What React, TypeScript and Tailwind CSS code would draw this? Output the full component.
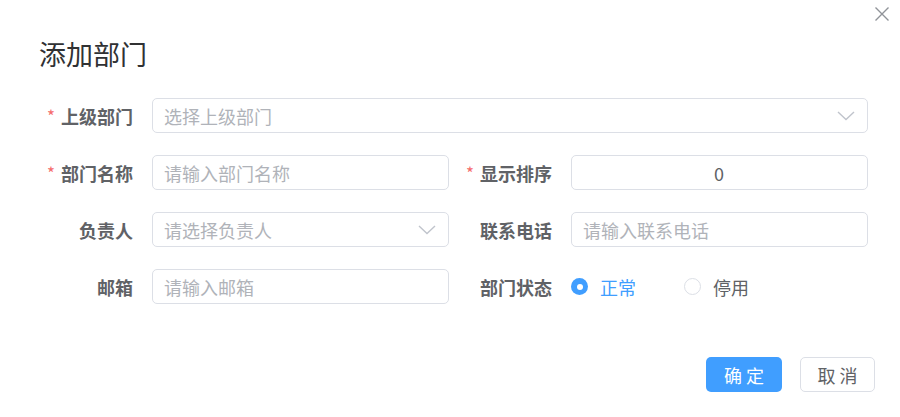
import React from "react";

const font = { fontFamily: '"Noto Sans CJK SC", "Noto Sans", sans-serif' };

function Label({ text, required }: { text: string; required?: boolean }) {
  return (
    <div className="w-[122px] shrink-0 pr-[19px] flex items-center justify-end text-[18px] font-bold text-[#606266] leading-none">
      {required && <span className="text-[#f56c6c] font-normal mr-[6px] text-[17px]">*</span>}
      {text}
    </div>
  );
}

function Chevron() {
  return (
    <svg width="18" height="10" viewBox="0 0 18 10" className="shrink-0">
      <path d="M1 1 L9 8.5 L17 1" fill="none" stroke="#c0c4cc" strokeWidth="1.4" />
    </svg>
  );
}

function Input({ placeholder, value, select, center }: { placeholder?: string; value?: string; select?: boolean; center?: boolean }) {
  return (
    <div className="flex-1 h-[35px] border border-[#dcdfe6] rounded-[5px] flex items-center pl-[11px] pr-[12px] text-[18px] leading-none">
      <span className={`flex-1 ${value ? "text-[#606266]" : "text-[#b0b3b9]"} ${center ? "text-center" : ""}`}>
        {value ?? placeholder}
      </span>
      {select && <Chevron />}
    </div>
  );
}

export default function App() {
  return (
    <div className="relative w-[900px] h-[417px] bg-white overflow-hidden" style={font}>
      <svg className="absolute top-[7px] right-[11px]" width="14" height="14" viewBox="0 0 14 14">
        <path d="M0.5 0.5 L13.5 13.5 M13.5 0.5 L0.5 13.5" stroke="#909399" strokeWidth="1.4" />
      </svg>
      <div className="pt-[41px] pl-[39px] text-[27px] leading-[26px] text-[#303133]">添加部门</div>
      <div className="mt-[31px] pl-[30px] pr-[32px] flex flex-col gap-[22px]">
        <div className="flex">
          <Label text="上级部门" required />
          <Input placeholder="选择上级部门" select />
        </div>
        <div className="grid grid-cols-2">
          <div className="flex">
            <Label text="部门名称" required />
            <Input placeholder="请输入部门名称" />
          </div>
          <div className="flex">
            <Label text="显示排序" required />
            <Input value="0" center />
          </div>
        </div>
        <div className="grid grid-cols-2">
          <div className="flex">
            <Label text="负责人" />
            <Input placeholder="请选择负责人" select />
          </div>
          <div className="flex">
            <Label text="联系电话" />
            <Input placeholder="请输入联系电话" />
          </div>
        </div>
        <div className="grid grid-cols-2">
          <div className="flex">
            <Label text="邮箱" />
            <Input placeholder="请输入邮箱" />
          </div>
          <div className="flex">
            <Label text="部门状态" />
            <div className="flex-1 h-[35px] flex items-center text-[18px] leading-none">
              <div className="flex items-center">
                <span className="w-[17px] h-[17px] rounded-full bg-[#409eff] flex items-center justify-center">
                  <span className="w-[6px] h-[6px] rounded-full bg-white" />
                </span>
                <span className="ml-[12px] text-[#409eff]">正常</span>
              </div>
              <div className="flex items-center ml-[48px]">
                <span className="w-[17px] h-[17px] rounded-full border border-[#dcdfe6] bg-white" />
                <span className="ml-[12px] text-[#606266]">停用</span>
              </div>
            </div>
          </div>
        </div>
      </div>
      <div className="absolute top-[357px] right-[25px] flex gap-[18px]">
        <button className="w-[76px] h-[35px] rounded-[5px] bg-[#409eff] text-white text-[18px] leading-none tracking-[4px] pl-[4px]">确定</button>
        <button className="w-[75px] h-[35px] rounded-[5px] border border-[#dcdfe6] bg-white text-[#606266] text-[18px] leading-none tracking-[4px] pl-[4px]">取消</button>
      </div>
    </div>
  );
}
